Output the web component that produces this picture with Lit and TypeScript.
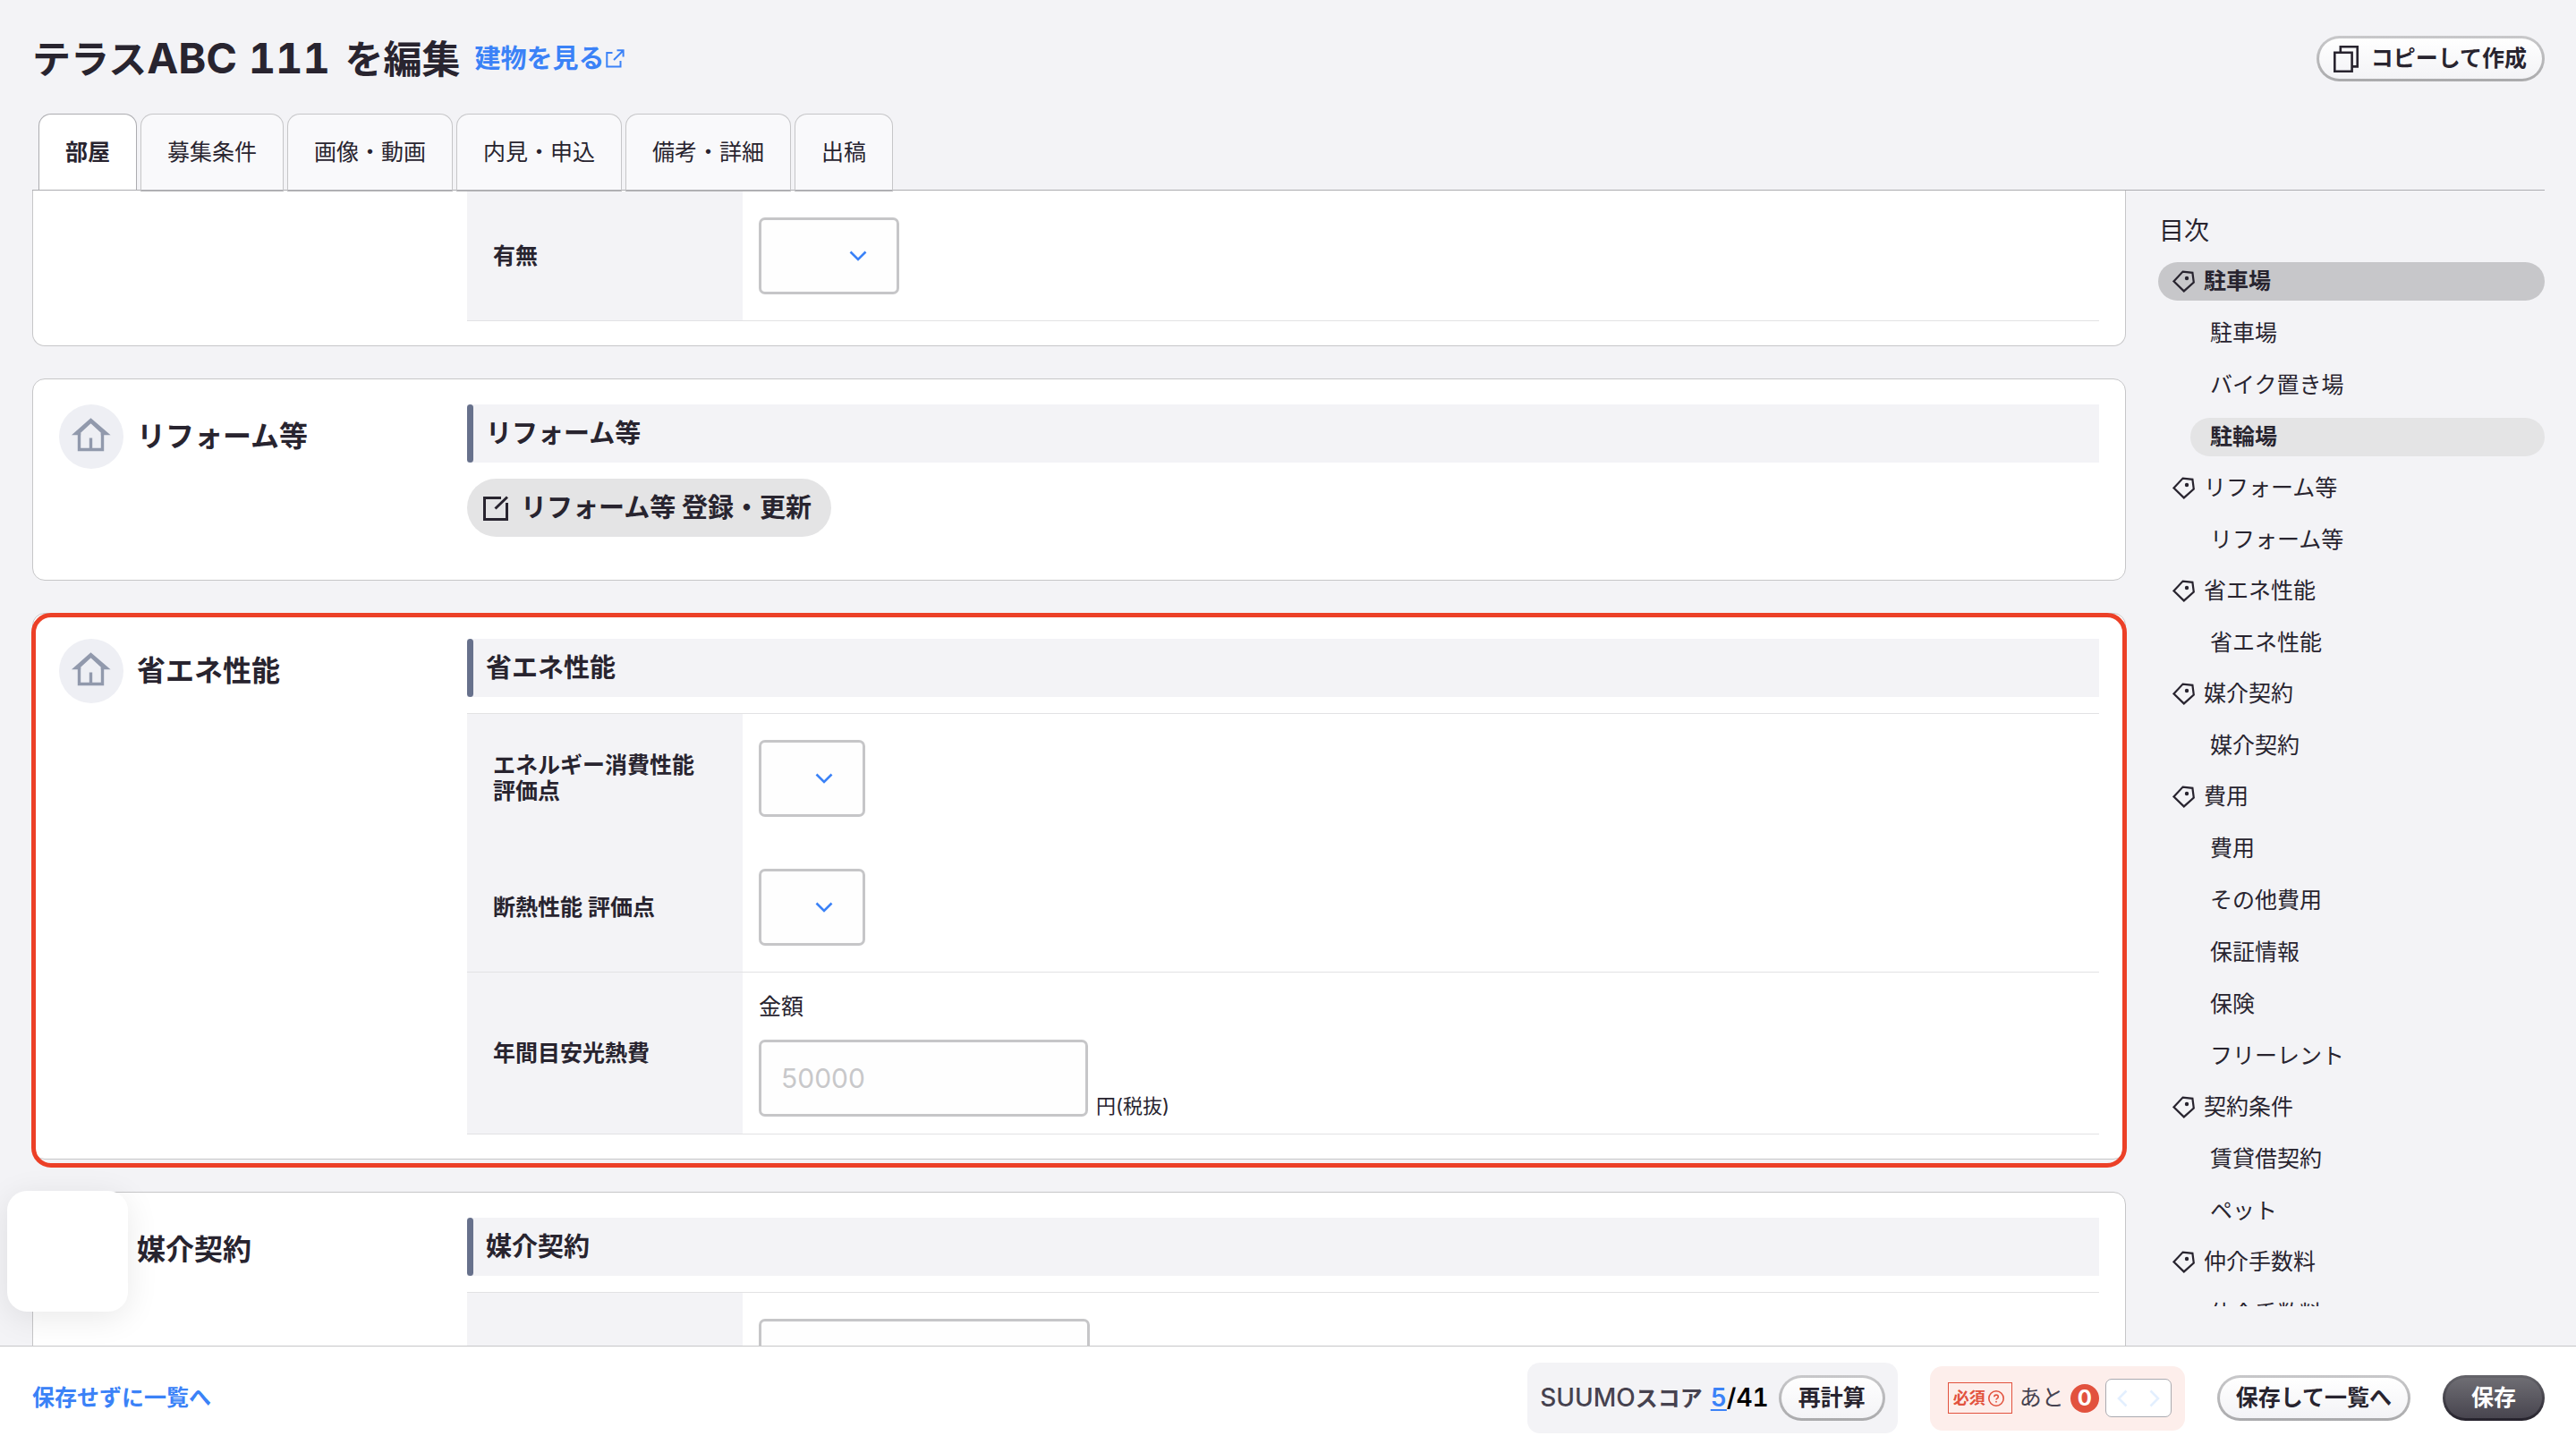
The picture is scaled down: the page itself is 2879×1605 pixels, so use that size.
import { LitElement, html, css, svg, nothing } from "lit";
import type { TemplateResult } from "lit";
import { customElement } from "lit/decorators.js";
import { classMap } from "lit/directives/class-map.js";

interface TocGroup {
  title: string;
  active?: boolean;
  items: { label: string; current?: boolean }[];
}

const TABS = ["部屋", "募集条件", "画像・動画", "内見・申込", "備考・詳細", "出稿"];

const TOC: TocGroup[] = [
  {
    title: "駐車場",
    active: true,
    items: [{ label: "駐車場" }, { label: "バイク置き場" }, { label: "駐輪場", current: true }],
  },
  { title: "リフォーム等", items: [{ label: "リフォーム等" }] },
  { title: "省エネ性能", items: [{ label: "省エネ性能" }] },
  { title: "媒介契約", items: [{ label: "媒介契約" }] },
  {
    title: "費用",
    items: [
      { label: "費用" },
      { label: "その他費用" },
      { label: "保証情報" },
      { label: "保険" },
      { label: "フリーレント" },
    ],
  },
  { title: "契約条件", items: [{ label: "賃貸借契約" }, { label: "ペット" }] },
  { title: "仲介手数料", items: [{ label: "仲介手数料" }] },
];

const icon = (cls: string, box: string, body: TemplateResult) =>
  html`<svg class="icon ${cls}" viewBox=${box} aria-hidden="true">${body}</svg>`;

const houseIcon = () =>
  icon(
    "house",
    "0 0 72 72",
    svg`<path d="M22.5 32V50.5H48.5V32M35.5 37.5V50" /><path d="M18.5 32.5H22.5V31L35.5 19L48.5 31V32.5H53L35.5 17.5Z" />`
  );
const tagIcon = () =>
  icon(
    "tag",
    "0 0 25 25",
    svg`<path d="M1.4 12.4L11.6 1.6L22.4 2.8L23.8 13.6L12.8 23.4Z" /><circle cx="16" cy="9" r="2.2" />`
  );
const copyIcon = () =>
  icon(
    "copy",
    "0 0 28 30",
    svg`<path d="M1.3 7.8H20.6V28.7H1.3Z" /><path d="M7.8 7.8V1.3H26.7V23.4H20.6" />`
  );
const externalIcon = () =>
  icon("external", "0 0 21 21", svg`<path d="M7.5 4H1.3V19.5H16.5V13M9 12L19 2M12.5 1.3H19.6V8.5" />`);
const editIcon = () =>
  icon("edit", "0 0 28 28", svg`<path d="M20 2.5H1.5V26.5H26.5V8M13.5 14.5L27 1.5" />`);
const chevronIcon = () => icon("chevron", "0 0 20 12", svg`<path d="M1.5 1.5L10 10L18.5 1.5" />`);
const helpIcon = () =>
  icon(
    "help",
    "0 0 18 18",
    svg`<circle cx="9" cy="9" r="8.2" /><path d="M6.8 7.2C6.8 4.4 11.3 4.4 11.3 7.2C11.3 8.8 9 8.8 9 10.6M9 12V13.6" />`
  );
const prevIcon = () => icon("arrow", "0 0 12 20", svg`<path d="M10.5 1.5L2 10L10.5 18.5" />`);
const nextIcon = () => icon("arrow", "0 0 12 20", svg`<path d="M1.5 1.5L10 10L1.5 18.5" />`);

@customElement("app-root")
export class AppRoot extends LitElement {
  static styles = css`
    :host {
      --ink: #28242f;
      --blue: #3b82f7;
      --surface: #f3f3f6;
      --line: #c6c6c8;
      --red: #e2523e;
      display: flex;
      flex-direction: column;
      height: 100vh;
      overflow: hidden;
      background: var(--surface);
      color: var(--ink);
      font-family: Inter, "Noto Sans CJK JP", sans-serif;
      font-size: 25px;
      line-height: 29px;
    }
    * {
      box-sizing: border-box;
    }
    h1, h2, h3, p, ul {
      margin: 0;
      padding: 0;
    }
    ul {
      list-style: none;
    }
    a {
      color: inherit;
      text-decoration: none;
    }
    button, input, select {
      font: inherit;
      color: inherit;
      margin: 0;
    }
    .icon {
      display: block;
      flex: none;
      fill: none;
      stroke: currentColor;
    }

    /* Page header */
    .header {
      position: relative;
      z-index: 1;
      padding: 40px 35px 0 36px;
    }
    .title-row {
      display: flex;
      align-items: center;
      height: 51px;
      margin-bottom: 36px;
    }
    h1 {
      font-size: 43px;
      line-height: 50px;
      white-space: pre;
    }
    h1 .latin {
      margin-right: 4px;
      font-size: 47px;
      font-variant-numeric: tabular-nums;
    }
    .building-link {
      display: flex;
      align-items: center;
      gap: 1px;
      margin-left: 16px;
      color: var(--blue);
      font-size: 29px;
      font-weight: 700;
    }
    .external {
      width: 21px;
      height: 21px;
      stroke-width: 2;
    }
    .pill {
      display: inline-flex;
      align-items: center;
      justify-content: center;
      height: 51px;
      padding: 0 18px;
      border: 3px solid transparent;
      border-radius: 26px;
      background: linear-gradient(#fff, #f3f3f6) padding-box, linear-gradient(#c8c8ca, #aaaaac) border-box;
      font-weight: 700;
      white-space: nowrap;
    }
    .pill.dark {
      padding: 0 29px;
      background: linear-gradient(#6e6d73, #48454f) padding-box, linear-gradient(#66656b, #25222c) border-box;
      color: #fff;
    }
    .pill.with-icon {
      gap: 14px;
      margin-left: auto;
      padding: 0 17px 0 16px;
    }
    .copy {
      width: 28px;
      height: 30px;
      stroke-width: 2.6;
    }
    .tabs {
      display: flex;
      gap: 4px;
      height: 86px;
      padding: 0 7px;
      border-bottom: 1px solid #acacb0;
    }
    .tab {
      padding: 0 29px;
      margin-bottom: -2px;
      border: 1px solid var(--line);
      border-bottom: 2px solid #b0b0b3;
      border-radius: 14px 14px 0 0;
      background: #f9f9fb;
    }
    .tab.selected {
      margin-bottom: 0;
      border-color: #acacb0;
      border-bottom: 0;
      background: #fff;
      font-weight: 700;
    }

    /* Scrolling body */
    .body {
      flex: 1;
      min-height: 0;
      display: grid;
      grid-template-columns: minmax(0, 1fr) 432px;
      gap: 36px;
      padding: 0 35px 0 36px;
      overflow: hidden;
    }
    .sections {
      display: flex;
      flex-direction: column;
      gap: 36px;
      min-height: 0;
    }
    .card {
      position: relative;
      flex: none;
      display: grid;
      grid-template-columns: 456px minmax(0, 1fr);
      padding: 28px 29px 27px;
      border: 1px solid var(--line);
      border-radius: 14px;
      background: #fff;
    }
    .card.continued {
      padding-top: 1px;
      border-top: 0;
      border-radius: 0 0 14px 14px;
    }
    .card.highlight::after {
      content: "";
      position: absolute;
      inset: -1px -2px -10px;
      border: 5px solid #ec4027;
      border-radius: 22px;
      pointer-events: none;
    }
    .card-title {
      display: flex;
      align-items: center;
      gap: 15px;
      height: 72px;
      font-size: 32px;
      line-height: 36px;
    }
    .house {
      width: 72px;
      height: 72px;
      border-radius: 50%;
      background: #eeeff4;
      color: #9199ac;
      stroke-width: 3.4;
    }
    .bar {
      display: flex;
      align-items: center;
      height: 65px;
      margin-bottom: 18px;
      background: var(--surface);
      font-size: 29px;
    }
    .bar::before {
      content: "";
      align-self: stretch;
      width: 7px;
      margin-right: 14px;
      border-radius: 4px;
      background: #67718c;
    }
    .edit-button {
      display: inline-flex;
      align-items: center;
      gap: 14px;
      height: 65px;
      margin-bottom: 21px;
      padding: 0 22px 0 18px;
      border: 0;
      border-radius: 33px;
      background: #e4e4e5;
      font-size: 29px;
      font-weight: 700;
    }
    .edit {
      width: 28px;
      height: 28px;
      stroke-width: 3;
    }

    /* Form rows */
    .rows {
      border-top: 1px solid #e2e2e4;
    }
    .continued .rows {
      border-top: 0;
    }
    .row {
      display: grid;
      grid-template-columns: 308px minmax(0, 1fr);
      border-bottom: 1px solid #e2e2e4;
    }
    .row.joined {
      border-bottom: 0;
    }
    .name {
      display: flex;
      align-items: center;
      padding: 0 29px;
      background: var(--surface);
      font-weight: 700;
    }
    .field {
      padding: 29px 18px;
    }
    .field.priced {
      padding: 24px 18px 19px;
    }
    .caption {
      display: block;
      margin-bottom: 22px;
    }
    .control {
      height: 86px;
      border: 3px solid var(--line);
      border-radius: 7px;
      background: #fefefe;
    }
    .select-box {
      display: inline-grid;
      align-items: center;
      vertical-align: top;
    }
    .select-box > * {
      grid-area: 1 / 1;
    }
    select.control {
      appearance: none;
      width: 119px;
      padding: 0 22px;
    }
    select.medium {
      width: 157px;
    }
    select.wide {
      width: 370px;
    }
    .chevron {
      justify-self: end;
      width: 20px;
      height: 12px;
      margin-right: 36px;
      color: var(--blue);
      stroke-width: 2.6;
      pointer-events: none;
    }
    .amount {
      display: flex;
      align-items: flex-end;
      gap: 9px;
      font-size: 22px;
      line-height: 24px;
    }
    input.control {
      width: 368px;
      padding: 0 22px;
      font-size: 30px;
    }
    input::placeholder {
      color: #c8c8ca;
      opacity: 1;
    }

    /* Table of contents */
    .toc {
      display: flex;
      flex-direction: column;
      min-height: 0;
      margin-bottom: 44px;
      overflow: hidden;
    }
    .toc-heading {
      margin: 31px 0 20px;
      padding-left: 1px;
      font-size: 28px;
      font-weight: 400;
    }
    .groups {
      display: flex;
      flex-direction: column;
      gap: 14px;
    }
    .group {
      display: flex;
      flex-direction: column;
      gap: 15px;
    }
    .toc-link {
      display: flex;
      align-items: center;
      gap: 10px;
      height: 43px;
      padding-left: 16px;
      border-radius: 22px;
    }
    .toc-link.sub {
      margin-left: 36px;
      padding-left: 22px;
    }
    .toc-link.active {
      background: #c7c7ca;
      font-weight: 700;
    }
    .toc-link.current {
      background: #e4e4e5;
      font-weight: 700;
    }
    .tag {
      width: 25px;
      height: 25px;
      stroke-width: 2.2;
    }
    .tag circle {
      fill: currentColor;
      stroke: none;
    }

    /* Action bar */
    .footer {
      display: flex;
      align-items: center;
      gap: 36px;
      padding: 18px 35px 3px 36px;
      border-top: 1px solid var(--line);
      background: #fff;
    }
    .leave {
      margin-right: auto;
      color: var(--blue);
      font-weight: 700;
    }
    .score {
      display: flex;
      align-items: center;
      height: 79px;
      padding: 0 14px;
      border-radius: 14px;
      background: var(--surface);
    }
    .score .pill {
      width: 119px;
      margin-left: 11px;
    }
    .score-label {
      color: #46424f;
      font-weight: 700;
    }
    .score .latin {
      font-size: 28px;
      font-weight: 500;
      font-variant-numeric: tabular-nums;
    }
    .score-value {
      margin-left: 9px;
      color: #000;
    }
    .score .score-value {
      font-weight: 600;
    }
    .score-value a {
      color: var(--blue);
      text-decoration: underline;
      text-decoration-thickness: 2px;
      text-underline-offset: 3px;
    }
    .required {
      display: flex;
      align-items: center;
      height: 72px;
      padding: 0 15px 0 20px;
      border-radius: 14px;
      background: #fdeeeb;
      color: #46424f;
    }
    .badge {
      display: flex;
      align-items: center;
      gap: 3px;
      height: 35px;
      margin-right: 8px;
      padding: 0 8px 0 5px;
      border: 1px solid var(--red);
      color: var(--red);
      font-size: 18px;
      font-weight: 700;
    }
    .help {
      width: 18px;
      height: 18px;
      stroke-width: 1.6;
    }
    .count {
      width: 32px;
      height: 32px;
      margin: 0 7px;
      border-radius: 50%;
      background: var(--red);
      color: #fff;
      font-size: 24px;
      font-weight: 700;
      line-height: 32px;
      text-align: center;
    }
    .stepper {
      display: flex;
      width: 74px;
      height: 43px;
      border: 1px solid #aaaab0;
      border-radius: 7px;
      background: #fff;
    }
    .step {
      flex: 1;
      display: grid;
      place-items: center;
      padding: 0;
      border: 0;
      background: none;
      color: #e3effe;
    }
    .arrow {
      width: 12px;
      height: 20px;
      stroke-width: 2.6;
    }

    /* Floating launcher over the page corner */
    .launcher {
      position: fixed;
      left: 8px;
      bottom: 139px;
      z-index: 2;
      width: 135px;
      height: 135px;
      border-radius: 22px;
      background: #fff;
      box-shadow: 0 7px 36px rgba(0, 0, 0, 0.09);
    }
  `;

  private select(id: string, width = "") {
    return html`<div class="select-box">
      <select id=${id} class="control ${width}"><option></option></select>
      ${chevronIcon()}
    </div>`;
  }

  private row(id: string, name: string, joined = false, width = "") {
    return html`<div class=${classMap({ row: true, joined })}>
      <label class="name" for=${id}>${name}</label>
      <div class="field">${this.select(id, width)}</div>
    </div>`;
  }

  private card(title: string, content: TemplateResult, highlight = false) {
    return html`<section class=${classMap({ card: true, highlight })}>
      <h2 class="card-title">${houseIcon()}${title}</h2>
      <div>
        <h3 class="bar">${title}</h3>
        ${content}
      </div>
    </section>`;
  }

  private tocGroup(group: TocGroup) {
    return html`<li>
      <ul class="group">
        <li>
          <a href="#" class=${classMap({ "toc-link": true, active: !!group.active })}>${tagIcon()}${group.title}</a>
        </li>
        ${group.items.map(
          (item) => html`<li>
            <a
              href="#"
              class=${classMap({ "toc-link": true, sub: true, current: !!item.current })}
              aria-current=${item.current ? "true" : nothing}
              >${item.label}</a
            >
          </li>`
        )}
      </ul>
    </li>`;
  }

  render() {
    return html`
      <header class="header">
        <div class="title-row">
          <h1>テラス<span class="latin">ABC 111 </span>を編集</h1>
          <a class="building-link" href="#">建物を見る${externalIcon()}</a>
          <button class="pill with-icon" type="button">${copyIcon()}コピーして作成</button>
        </div>
        <div class="tabs" role="tablist">
          ${TABS.map(
            (tab, i) => html`<button
              type="button"
              role="tab"
              class=${classMap({ tab: true, selected: i === 0 })}
              aria-selected=${i === 0 ? "true" : "false"}
            >${tab}</button>`
          )}
        </div>
      </header>

      <main class="body">
        <div class="sections">
          <section class="card continued">
            <div></div>
            <div class="rows">${this.row("bicycle", "有無", false, "medium")}</div>
          </section>
          ${this.card(
            "リフォーム等",
            html`<button class="edit-button" type="button">${editIcon()}リフォーム等 登録・更新</button>`
          )}
          ${this.card(
            "省エネ性能",
            html`<div class="rows">
              ${this.row("energy", "エネルギー消費性能 評価点", true)} ${this.row("insulation", "断熱性能 評価点")}
              <div class="row">
                <div class="name">年間目安光熱費</div>
                <div class="field priced">
                  <label class="caption" for="utility">金額</label>
                  <div class="amount">
                    <input id="utility" class="control" type="text" inputmode="numeric" placeholder="50000" />
                    <span>円(税抜)</span>
                  </div>
                </div>
              </div>
            </div>`,
            true
          )}
          ${this.card("媒介契約", html`<div class="rows">${this.row("brokerage", "", false, "wide")}</div>`)}
        </div>

        <nav class="toc">
          <h2 class="toc-heading">目次</h2>
          <ul class="groups">
            ${TOC.map((group) => this.tocGroup(group))}
          </ul>
        </nav>
      </main>

      <footer class="footer">
        <a class="leave" href="#">保存せずに一覧へ</a>
        <div class="score">
          <span class="score-label"><span class="latin">SUUMO</span>スコア</span>
          <span class="score-value latin"><a href="#">5</a>/41</span>
          <button class="pill" type="button">再計算</button>
        </div>
        <div class="required">
          <span class="badge">必須${helpIcon()}</span>
          <span>あと</span>
          <span class="count">0</span>
          <div class="stepper">
            <button class="step" type="button" aria-label="前へ">${prevIcon()}</button>
            <button class="step" type="button" aria-label="次へ">${nextIcon()}</button>
          </div>
        </div>
        <button class="pill" type="button">保存して一覧へ</button>
        <button class="pill dark" type="button">保存</button>
      </footer>

      <div class="launcher"></div>
    `;
  }
}
